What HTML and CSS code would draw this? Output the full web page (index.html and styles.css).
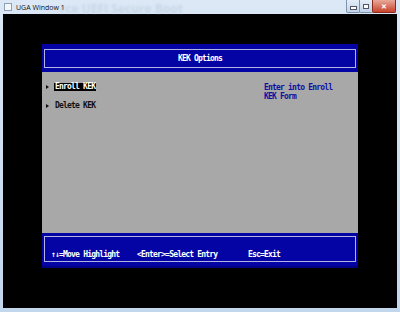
FILE: index.html
```html
<!DOCTYPE html>
<html lang="en">
<head>
    <meta charset="UTF-8">
    <title>UGA Window 1</title>
    <link rel="stylesheet" href="styles.css">
</head>
<body>
    <div class="window">
        <div class="titlebar">
            <span class="app-icon"></span>
            <span class="title">UGA Window 1</span>
            <span class="ghost">rce UEFI Secure Boot</span>
            <div class="controls">
                <span class="btn min"><i></i></span>
                <span class="btn max"><i></i></span>
                <span class="btn close">&#x2715;</span>
            </div>
        </div>
        <div class="screen">
            <div class="panel">
                <div class="header">
                    <div class="header-inner">KEK Options</div>
                </div>
                <div class="content">
                    <div class="menu">
                        <div class="item"><span class="arrow"></span><span class="label selected">Enroll KEK</span></div>
                        <div class="item"><span class="arrow"></span><span class="label">Delete KEK</span></div>
                    </div>
                    <div class="help">Enter into Enroll<br>KEK Form</div>
                </div>
                <div class="footer">
                    <div class="footer-inner">
                        <span>&#x2191;&#x2193;=Move Highlight</span>
                        <span>&lt;Enter&gt;=Select Entry</span>
                        <span>Esc=Exit</span>
                    </div>
                </div>
            </div>
        </div>
    </div>
</body>
</html>
```

FILE: styles.css
```css
body {
    margin: 0;
    background: #000;
}
.window {
    width: 400px;
    height: 312px;
    background: linear-gradient(to bottom, #dce8f5, #c2d6ec);
    display: flex;
    flex-direction: column;
}
.titlebar {
    height: 14px;
    position: relative;
    display: flex;
    align-items: center;
    font-family: "Open Sans", "Liberation Sans", sans-serif;
    font-size: 7px;
    color: #111;
}
.app-icon {
    width: 6px;
    height: 6px;
    margin-left: 4px;
    margin-right: 4px;
    border: 1px solid #8aa0b8;
    background: #f4f6f8;
}
.title {
    position: relative;
    z-index: 1;
}
.ghost {
    position: absolute;
    left: 60px;
    top: 0;
    font-size: 12px;
    font-weight: bold;
    color: #c6d6e8;
    filter: blur(1.2px);
    white-space: nowrap;
}
.controls {
    position: absolute;
    right: 4px;
    top: 0;
    display: flex;
}
.btn {
    height: 12px;
    width: 12px;
    border: 1px solid #7e93ad;
    border-top: none;
    border-radius: 0 0 2px 2px;
    background: linear-gradient(to bottom, #e4edf7, #c3d4e8);
    display: flex;
    align-items: center;
    justify-content: center;
    margin-left: -1px;
}
.min i {
    width: 5px;
    height: 2px;
    background: #fff;
    border: 1px solid #556;
    margin-top: 4px;
}
.max i {
    width: 4px;
    height: 3px;
    border: 1px solid #556;
    background: #fff;
}
.close {
    width: 22px;
    background: linear-gradient(to bottom, #e9a99b, #c8442c);
    border-color: #8a2a1a;
    color: #fff;
    font-size: 7px;
    font-weight: bold;
}
.screen {
    flex: 1;
    margin: 0 3px 4px;
    background: #000;
    padding: 30px 0 0 39px;
}
.panel {
    width: 316px;
    font-family: "DejaVu Sans Mono", "Liberation Mono", monospace;
    font-size: 8px;
    letter-spacing: -0.8px;
    font-weight: bold;
}
.header {
    background: #0404a4;
    height: 28px;
    box-sizing: border-box;
    padding: 5px 2px 4px;
}
.header-inner {
    height: 100%;
    box-sizing: border-box;
    border: 1px solid #b4b4e4;
    color: #fff;
    display: flex;
    align-items: center;
    justify-content: center;
}
.content {
    background: #a8a8a8;
    height: 161px;
    display: grid;
    grid-template-columns: 222px 1fr;
    padding-top: 11px;
    box-sizing: border-box;
}
.menu {
    padding-left: 4px;
}
.item {
    display: flex;
    align-items: center;
    height: 8px;
    margin-bottom: 11px;
    color: #111;
}
.arrow {
    width: 0;
    height: 0;
    border-left: 3px solid #111;
    border-top: 2px solid transparent;
    border-bottom: 2px solid transparent;
    margin-right: 5px;
}
.label {
    padding: 0 1px;
    line-height: 8px;
}
.selected {
    background: #000;
    color: #fff;
}
.help {
    color: #1010a0;
    line-height: 9px;
}
.footer {
    background: #0404a4;
    height: 35px;
    box-sizing: border-box;
    padding: 3px 2px 4px;
    border-bottom: 2px solid #000080;
}
.footer-inner {
    height: 100%;
    box-sizing: border-box;
    border: 1px solid #b4b4e4;
    color: #fff;
    display: grid;
    grid-template-columns: 86px 111px 1fr;
    align-items: end;
    line-height: 8px;
    padding: 0 0 2px 6px;
}
```
